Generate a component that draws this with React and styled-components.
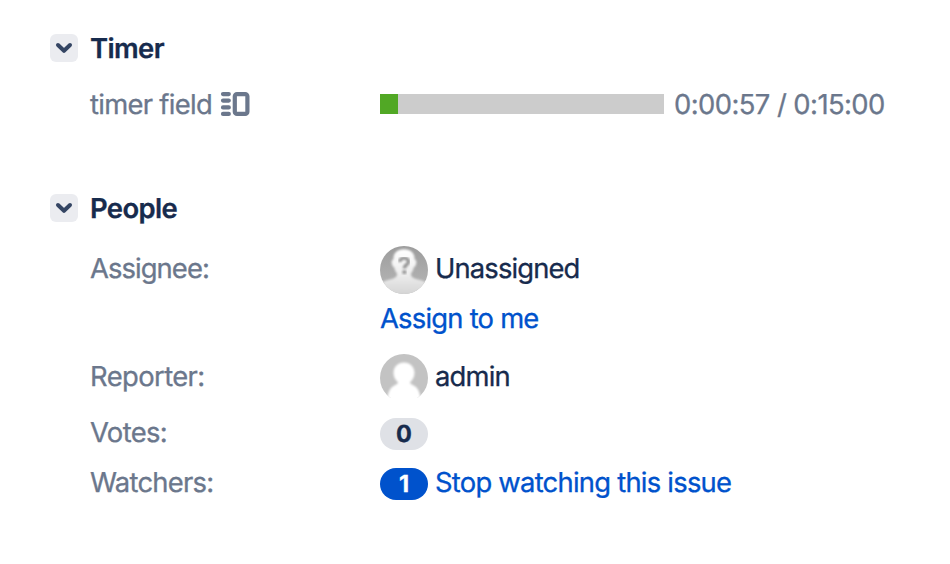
import React from "react";
import styled, { createGlobalStyle } from "styled-components";

const GlobalStyle = createGlobalStyle`
  * { box-sizing: border-box; }
  body {
    margin: 0;
    background: #fff;
    color: #172b4d;
    font-family: Inter, "Liberation Sans", sans-serif;
    font-size: 27.4px;
    text-rendering: geometricPrecision;
    -webkit-text-stroke: 0.3px;
  }
`;

const Page = styled.main`
  width: 950px;
  height: 564px;
  padding: 34px 50px 0;
  overflow: hidden;
  display: flex;
  flex-direction: column;
  gap: 70px;
`;

const Section = styled.section`
  display: flex;
  flex-direction: column;
`;

const Header = styled.header`
  display: flex;
  align-items: center;
  gap: 12px;
  height: 28px;
`;

const Toggle = styled.button`
  display: flex;
  width: 28px;
  height: 28px;
  padding: 0;
  border: 0;
  border-radius: 6px;
  background: #ebecf0;
`;

const Title = styled.h2`
  margin: 0;
  font-size: 27.4px;
  line-height: 28px;
  font-weight: 600;
  letter-spacing: ${(p) => p.$tracking || 0}px;
`;

const Fields = styled.dl`
  margin: ${(p) => p.$offset}px 0 0 40px;
  display: flex;
  flex-direction: column;
`;

const Row = styled.div`
  display: grid;
  grid-template-columns: 290px 1fr;
  align-items: start;
  height: ${(p) => p.$height}px;
  line-height: ${(p) => p.$line}px;
  margin-bottom: ${(p) => p.$after || 0}px;
`;

const Label = styled.dt`
  display: flex;
  align-items: center;
  color: #6b778c;
  white-space: nowrap;
`;

const Value = styled.dd`
  margin: 0;
  display: flex;
  align-items: flex-start;
  gap: ${(p) => p.$gap ?? 7}px;
  white-space: nowrap;
`;

const Text = styled.span`
  color: ${(p) => p.$color || "inherit"};
  letter-spacing: ${(p) => p.$tracking || 0}px;
`;

const Link = styled.a`
  color: #0052cc;
  text-decoration: none;
  letter-spacing: ${(p) => p.$tracking || 0}px;
`;

const Track = styled.div`
  width: 284px;
  height: 20px;
  margin-top: 10px;
  background: #ccc;
`;

const Elapsed = styled.div`
  width: 18px;
  height: 100%;
  background: #51a825;
`;

const Badge = styled.span`
  width: 48px;
  height: 32px;
  border-radius: 16px;
  background: ${(p) => (p.$active ? "#0052cc" : "#dfe1e6")};
  color: ${(p) => (p.$active ? "#fff" : "#172b4d")};
  font-size: 23.5px;
  font-weight: 650;
  line-height: 32px;
  text-align: center;
`;

const AvatarSvg = styled.svg`
  display: block;
  flex: none;
`;

const FieldIconSvg = styled.svg`
  display: block;
  margin-left: 8px;
`;

function Chevron() {
  return (
    <svg width="28" height="28" viewBox="0 0 28 28" fill="none">
      <path d="M8 11L14 16.8L20 11" stroke="#344563" strokeWidth="4" strokeLinecap="round" strokeLinejoin="round" />
    </svg>
  );
}

function FieldIcon() {
  return (
    <FieldIconSvg width="30" height="24" viewBox="0 0 30 24" fill="none" stroke="#6b778c">
      <path d="M3 2.1H8.8M3 8.6H8.8M3 15.4H8.8M3 21.9H8.8" strokeWidth="4.2" strokeLinecap="round" />
      <rect x="14.8" y="2.1" width="12.6" height="19.8" rx="2.2" strokeWidth="4.2" />
    </FieldIconSvg>
  );
}

function UnassignedAvatar() {
  return (
    <AvatarSvg width="48" height="48" viewBox="0 0 48 48">
      <defs>
        <clipPath id="ua-clip"><circle cx="24" cy="24" r="24" /></clipPath>
        <linearGradient id="ua-bg" x1="0" y1="0" x2="0" y2="1">
          <stop offset="0" stopColor="#9c9c9c" />
          <stop offset="1" stopColor="#b8b8b8" />
        </linearGradient>
        <linearGradient id="ua-body" x1="0" y1="0" x2="0" y2="1">
          <stop offset="0" stopColor="#fff" />
          <stop offset=".5" stopColor="#eee" />
          <stop offset="1" stopColor="#d0d0d0" />
        </linearGradient>
        <filter id="ua-soft"><feGaussianBlur stdDeviation=".8" /></filter>
      </defs>
      <g clipPath="url(#ua-clip)">
        <rect width="48" height="48" fill="url(#ua-bg)" />
        <path d="M24 3.2C17 3.2 13.2 7.2 13.4 13.5C12 14 11.3 15 11.8 17.5C12.2 20 13.2 21 14.2 21.3C14.7 24 15.7 26 17 27.6C17.2 31.5 14 32.5 8 34C3 35.3 1 37 -2 41V52H50V41C47 37 45 35.3 40 34C34 32.5 30.8 31.5 31 27.6C32.3 26 33.3 24 33.8 21.3C34.8 21 35.8 20 36.2 17.5C36.7 15 36 14 34.6 13.5C34.8 7.2 31 3.2 24 3.2Z" fill="url(#ua-body)" filter="url(#ua-soft)" />
        <path d="M19.8 16C19.8 10.9 28.5 11 28.5 15.7C28.5 19 24.4 18.5 24.4 22.4" fill="none" stroke="#969696" strokeWidth="3.4" filter="url(#ua-soft)" />
        <circle cx="24.4" cy="26.2" r="2.1" fill="#969696" filter="url(#ua-soft)" />
      </g>
    </AvatarSvg>
  );
}

function UserAvatar() {
  return (
    <AvatarSvg width="48" height="48" viewBox="0 0 48 48">
      <defs>
        <clipPath id="user-clip"><circle cx="24" cy="24" r="24" /></clipPath>
        <filter id="user-soft"><feGaussianBlur stdDeviation=".8" /></filter>
      </defs>
      <g clipPath="url(#user-clip)">
        <path d="M0 0H48V40L40 44H8L0 40Z" fill="#c3c3c3" />
        <path d="M24 8.4C17.8 8.4 13.5 13 13.5 18.7C13.5 23 15.4 26.2 18 28.2C17.8 30 16 30.5 13.5 32C9.5 34.5 7.5 39 6.7 50H41.3C40.5 39 38.5 34.5 34.5 32C32 30.5 30.2 30 30 28.2C32.6 26.2 34.5 23 34.5 18.7C34.5 13 30.2 8.4 24 8.4Z" fill="#fff" filter="url(#user-soft)" />
      </g>
    </AvatarSvg>
  );
}

function SectionHeader({ title, tracking }) {
  return (
    <Header>
      <Toggle aria-label={title}><Chevron /></Toggle>
      <Title $tracking={tracking}>{title}</Title>
    </Header>
  );
}

export default function App() {
  return (
    <>
      <GlobalStyle />
      <Page>
        <Section>
          <SectionHeader title="Timer" tracking={-0.6} />
          <Fields $offset={22}>
            <Row $height={40} $line={40}>
              <Label><Text $tracking={-0.7}>timer field</Text><FieldIcon /></Label>
              <Value $gap={10}>
                <Track><Elapsed /></Track>
                <Text $color="#6b778c" $tracking={-0.57}>0:00:57 / 0:15:00</Text>
              </Value>
            </Row>
          </Fields>
        </Section>
        <Section>
          <SectionHeader title="People" tracking={-0.6} />
          <Fields $offset={24}>
            <Row $height={48} $line={44}>
              <Label><Text $tracking={-0.93}>Assignee:</Text></Label>
              <Value><UnassignedAvatar /><Text $tracking={-0.88}>Unassigned</Text></Value>
            </Row>
            <Row $height={48} $line={48} $after={12}>
              <Label />
              <Value><Link $tracking={-0.78}>Assign to me</Link></Value>
            </Row>
            <Row $height={48} $line={44} $after={16}>
              <Label><Text $tracking={-0.6}>Reporter:</Text></Label>
              <Value><UserAvatar /><Text $tracking={-0.8}>admin</Text></Value>
            </Row>
            <Row $height={32} $line={28} $after={18}>
              <Label><Text $tracking={-0.65}>Votes:</Text></Label>
              <Value><Badge>0</Badge></Value>
            </Row>
            <Row $height={32} $line={28}>
              <Label><Text $tracking={-0.75}>Watchers:</Text></Label>
              <Value><Badge $active>1</Badge><Link $tracking={-0.76}>Stop watching this issue</Link></Value>
            </Row>
          </Fields>
        </Section>
      </Page>
    </>
  );
}
